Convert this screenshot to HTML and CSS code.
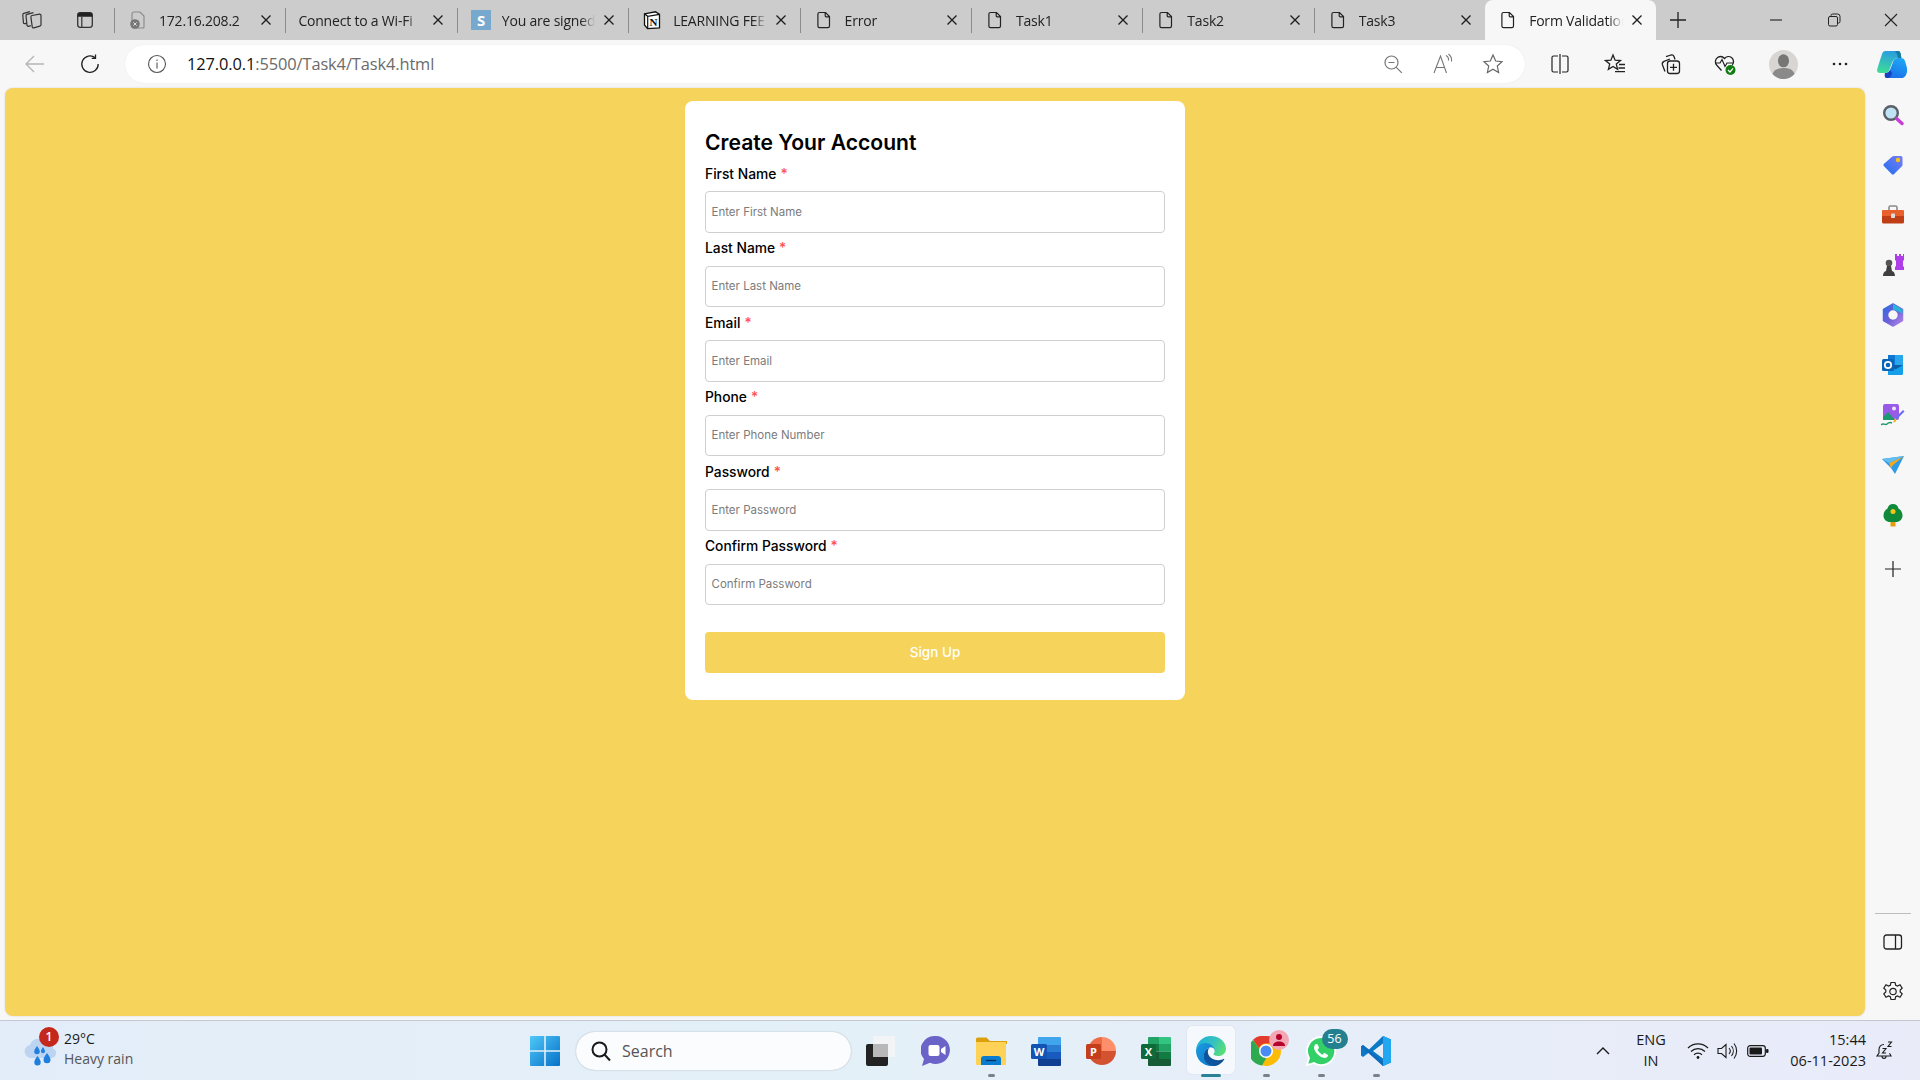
FILE: index.html
```html
<!DOCTYPE html>
<html lang="en">
<head>
<meta charset="utf-8">
<title>Form Validation</title>
<link rel="stylesheet" href="styles.css">
</head>
<body>
<svg class="defs" width="0" height="0" aria-hidden="true">
  <defs>
    <symbol id="doc" viewBox="0 0 20 20"><path d="M5.500 2.500h6l4 4v9.600a1.600 1.600 0 0 1-1.600 1.600H5.500a1.600 1.600 0 0 1-1.600-1.600V4.100a1.600 1.600 0 0 1 1.600-1.600zM11.200 2.700v3.100a1 1 0 0 0 1 1h3.100" fill="none" stroke="#222" stroke-width="1.200"/></symbol>
    <symbol id="x" viewBox="0 0 12 12"><path d="M1.500 1.500l9 9M10.500 1.500l-9 9" fill="none" stroke="#1c1c1c" stroke-width="1.300"/></symbol>
  </defs>
</svg>

<header class="tabstrip">
  <div class="strip-left">
    <span class="strip-cell">
      <svg width="22" height="22" viewBox="0 0 22 22" fill="none" stroke="#333" stroke-width="1.200" stroke-linejoin="round"><path d="M11 6.500l7.500-1.300a1.300 1.300 0 0 1 1.500 1.200v9.400a1.500 1.500 0 0 1-1.200 1.400l-6 1.700a1.300 1.300 0 0 1-1.600-1.200l-1.300-9.600a1.500 1.500 0 0 1 1.100-1.600z"/><path d="M9.800 16.700l-2.300.6a1.300 1.300 0 0 1-1.500-1.100L5 7a1.500 1.500 0 0 1 1-1.600L12.500 3.700M5.200 14.300l-1.500.4a1.200 1.200 0 0 1-1.300-1L1.800 6a1.500 1.500 0 0 1 1-1.600L9 2.600"/></svg>
    </span>
    <span class="strip-cell">
      <svg width="20" height="20" viewBox="0 0 20 20"><rect x="2.700" y="2.700" width="14.600" height="14.600" rx="2.500" fill="none" stroke="#333" stroke-width="1.300"/><path d="M2.700 5a2.300 2.300 0 0 1 2.300-2.300h10A2.300 2.300 0 0 1 17.300 5v1.800H2.700z" fill="#222"/><path d="M6.800 6.800v10.500" stroke="#333" stroke-width="1.200"/></svg>
    </span>
  </div>
  <i class="sep"></i>
  <div class="tab">
    <svg class="tab-icon" width="20" height="20" viewBox="0 0 20 20"><path d="M6 2h6l4 4v11a1 1 0 0 1-1 1H6a2 2 0 0 1-2-2V4a2 2 0 0 1 2-2z" fill="none" stroke="#888" stroke-width="1.100"/><circle cx="7" cy="14" r="4.800" fill="#777"/><path d="M5.300 12.300l3.400 3.400M8.700 12.300l-3.400 3.400" stroke="#ddd" stroke-width="1"/></svg>
    <span class="tab-title">172.16.208.2</span>
    <svg class="tab-x" width="12" height="12"><use href="#x"/></svg>
  </div>
  <i class="sep"></i>
  <div class="tab tab-noicon">
    <span class="tab-title">Connect to a Wi-Fi</span>
    <svg class="tab-x" width="12" height="12"><use href="#x"/></svg>
  </div>
  <i class="sep"></i>
  <div class="tab">
    <svg class="tab-icon" width="20" height="20" viewBox="0 0 20 20"><rect width="20" height="20" fill="#77a9cf"/><text x="10" y="15.500" class="s-logo">S</text></svg>
    <span class="tab-title">You are signed</span>
    <svg class="tab-x" width="12" height="12"><use href="#x"/></svg>
  </div>
  <i class="sep"></i>
  <div class="tab">
    <svg class="tab-icon" width="20" height="20" viewBox="0 0 20 20"><path d="M2.500 3.800L13.500 1.800l4 2.600v13.400L5.500 18.600l-3-3.700z" fill="#fff" stroke="#111" stroke-width="1.300"/><path d="M2.500 3.800l3.200 2.500 11.800-1.900M5.700 6.300v12.200" fill="none" stroke="#111" stroke-width="1.200"/><text x="11.300" y="15.700" class="n-logo">N</text></svg>
    <span class="tab-title">LEARNING FEE</span>
    <svg class="tab-x" width="12" height="12"><use href="#x"/></svg>
  </div>
  <i class="sep"></i>
  <div class="tab">
    <svg class="tab-icon" width="20" height="20"><use href="#doc"/></svg>
    <span class="tab-title">Error</span>
    <svg class="tab-x" width="12" height="12"><use href="#x"/></svg>
  </div>
  <i class="sep"></i>
  <div class="tab">
    <svg class="tab-icon" width="20" height="20"><use href="#doc"/></svg>
    <span class="tab-title">Task1</span>
    <svg class="tab-x" width="12" height="12"><use href="#x"/></svg>
  </div>
  <i class="sep"></i>
  <div class="tab">
    <svg class="tab-icon" width="20" height="20"><use href="#doc"/></svg>
    <span class="tab-title">Task2</span>
    <svg class="tab-x" width="12" height="12"><use href="#x"/></svg>
  </div>
  <i class="sep"></i>
  <div class="tab">
    <svg class="tab-icon" width="20" height="20"><use href="#doc"/></svg>
    <span class="tab-title">Task3</span>
    <svg class="tab-x" width="12" height="12"><use href="#x"/></svg>
  </div>
  <div class="tab tab-active">
    <svg class="tab-icon" width="20" height="20"><use href="#doc"/></svg>
    <span class="tab-title">Form Validation</span>
    <svg class="tab-x" width="12" height="12"><use href="#x"/></svg>
  </div>
  <span class="newtab">
    <svg width="18" height="18" viewBox="0 0 18 18"><path d="M9 1v16M1 9h16" stroke="#222" stroke-width="1.300"/></svg>
  </span>
  <div class="window-btns">
    <span class="win-cell"><svg width="14" height="14" viewBox="0 0 14 14"><path d="M1 7h12" stroke="#222" stroke-width="1.100"/></svg></span>
    <span class="win-cell"><svg width="14" height="14" viewBox="0 0 14 14" fill="none" stroke="#222" stroke-width="1"><rect x="1.500" y="3.500" width="9" height="9.500" rx="1.500"/><path d="M4 3.400V2.500A1.500 1.500 0 0 1 5.500 1h5A2.500 2.500 0 0 1 13 3.500v5a1.500 1.500 0 0 1-1.500 1.500h-1"/></svg></span>
    <span class="win-cell"><svg width="14" height="14" viewBox="0 0 14 14"><path d="M1 1l12 12M13 1L1 13" stroke="#222" stroke-width="1.100"/></svg></span>
  </div>
</header>

<nav class="toolbar">
  <span class="tool-cell">
    <svg width="20" height="20" viewBox="0 0 20 20" fill="none" stroke="#b5b5b5" stroke-width="1.300"><path d="M19 10H1M9 2l-8 8 8 8"/></svg>
  </span>
  <span class="tool-cell">
    <svg width="20" height="20" viewBox="0 0 20 20" fill="none" stroke="#222" stroke-width="1.300"><path d="M15.200 3.800A8.200 8.200 0 1 0 18.200 10M15.500 0.500v3.800h-3.800"/></svg>
  </span>
  <div class="address">
    <svg class="addr-info" width="20" height="20" viewBox="0 0 20 20" fill="none" stroke="#555" stroke-width="1.100"><circle cx="10" cy="10" r="8.500"/><path d="M10 8.500v6M10 5.500v1.400"/></svg>
    <span class="url"><span class="url-host">127.0.0.1</span>:5500/Task4/Task4.html</span>
    <span class="addr-cell">
      <svg width="20" height="20" viewBox="0 0 20 20" fill="none" stroke="#777" stroke-width="1.200"><circle cx="8.500" cy="8.500" r="6.500"/><path d="M13.300 13.300l5.500 5.500M5.500 8.500h6"/></svg>
    </span>
    <span class="addr-cell">
      <svg width="22" height="22" viewBox="0 0 22 22" fill="none" stroke="#777" stroke-width="1.100"><path d="M2 20L8.500 3l6 17M4.300 14.500h8.500M14 2.500a5 5 0 0 1 2.500 5M16.500 1a8 8 0 0 1 3 7.500"/></svg>
    </span>
    <span class="addr-cell">
      <svg width="22" height="22" viewBox="0 0 22 22" fill="none" stroke="#666" stroke-width="1.200"><path d="M11 2l2.700 6 6.300.7-4.700 4.300 1.300 6.500-5.600-3.300-5.600 3.300L6.700 13 2 8.700 8.300 8z"/></svg>
    </span>
  </div>
  <span class="tool-cell tool-first">
    <svg width="22" height="22" viewBox="0 0 22 22" fill="none" stroke="#222" stroke-width="1.200"><path d="M9 3H4.500A1.500 1.500 0 0 0 3 4.500v13A1.500 1.500 0 0 0 4.500 19H9M13 3h4.500A1.500 1.500 0 0 1 19 4.500v13a1.500 1.500 0 0 1-1.500 1.500H13M11 1v20"/></svg>
  </span>
  <span class="tool-cell">
    <svg width="22" height="22" viewBox="0 0 22 22" fill="none" stroke="#222" stroke-width="1.300"><path d="M9 2l2.100 5.200 5.400.4-4.200 3.500 1.300 5.300L9 13.500l-4.600 2.900 1.300-5.300-4.200-3.500 5.400-.4zM15 11.500h6M14.500 15h6.500M11 18.700h10"/></svg>
  </span>
  <span class="tool-cell">
    <svg width="22" height="22" viewBox="0 0 22 22" fill="none" stroke="#222" stroke-width="1.300"><path d="M6 18.500L3.500 12A3 3 0 0 1 5 8.300L11 6M7 3.700l5-1.700a2.500 2.500 0 0 1 3 1.500l1 3"/><rect x="8.500" y="8" width="12" height="12.500" rx="2.500"/><path d="M14.500 10.800v7M11 14.300h7"/></svg>
  </span>
  <span class="tool-cell">
    <svg width="24" height="24" viewBox="0 0 24 24"><path d="M8.500 18.500L4 13.500a5.200 5.200 0 0 1 1-8.300 5.300 5.300 0 0 1 6.500 1.300 5.300 5.300 0 0 1 7-1 5.200 5.200 0 0 1 .8 7.500" fill="none" stroke="#222" stroke-width="1.300"/><path d="M2.500 11h4.500l2-3.500 3 7 2-3.500h6" fill="none" stroke="#222" stroke-width="1.200"/><circle cx="17.500" cy="18" r="5" fill="#107c10"/><path d="M15 18l2 2 3-3.600" fill="none" stroke="#fff" stroke-width="1.200"/></svg>
  </span>
  <span class="tool-cell tool-avatar">
    <svg width="29" height="29" viewBox="0 0 29 29"><circle cx="14.500" cy="14.500" r="14.500" fill="#d8d6d4"/><ellipse cx="14.500" cy="10.800" rx="5.600" ry="6.500" fill="#767676"/><path d="M3.500 24c1.500-4.500 5.500-6 11-6s9.500 1.500 11 6a14.500 14.500 0 0 1-22 0z" fill="#8a8a8a"/></svg>
  </span>
  <span class="tool-cell tool-dots">
    <svg width="18" height="4" viewBox="0 0 18 4"><circle cx="3" cy="2" r="1.300" fill="#222"/><circle cx="9" cy="2" r="1.300" fill="#222"/><circle cx="15" cy="2" r="1.300" fill="#222"/></svg>
  </span>
  <span class="tool-cell tool-copilot">
    <svg width="30" height="27" viewBox="0 0 30 27"><defs><linearGradient id="cpa" x1="0.500" y1="0" x2="0.300" y2="1"><stop offset="0" stop-color="#2a9de0"/><stop offset="1" stop-color="#3ddc97"/></linearGradient><linearGradient id="cpb" x1="0.700" y1="0" x2="0.300" y2="1"><stop offset="0" stop-color="#1ea7f5"/><stop offset="1" stop-color="#1b6fe8"/></linearGradient></defs><path d="M21 7h3q3 0 4 3l2 7q1 7-4 10H10q-3 0-2-5 4 0 5-3l3-8q1-4 5-4z" fill="url(#cpb)"/><path d="M8 22q4 0 5-3l2 3q-1 5-5 5-3 0-2-5z" fill="#1a3fc0"/><path d="M8 0h13q2 0 2.500 2l.5 5q-7-1-9 5l-3 8q-1 2-4 2H3q-4 0-2.500-5L5 3q1-3 3-3z" fill="url(#cpa)"/><path d="M18 0h3q2 0 2.500 2l1 5H21q0-4-3-7z" fill="#1a7a9a"/></svg>
  </span>
</nav>

<div class="body-row">
  <main class="content">
    <form class="card">
      <h1 class="card-title">Create Your Account</h1>
      <div class="field"><label class="field-label">First Name <span class="req">*</span></label><input class="field-input" placeholder="Enter First Name"></div>
      <div class="field"><label class="field-label">Last Name <span class="req">*</span></label><input class="field-input" placeholder="Enter Last Name"></div>
      <div class="field"><label class="field-label">Email <span class="req">*</span></label><input class="field-input" placeholder="Enter Email"></div>
      <div class="field"><label class="field-label">Phone <span class="req">*</span></label><input class="field-input" placeholder="Enter Phone Number"></div>
      <div class="field"><label class="field-label">Password <span class="req">*</span></label><input class="field-input" placeholder="Enter Password"></div>
      <div class="field"><label class="field-label">Confirm Password <span class="req">*</span></label><input class="field-input" placeholder="Confirm Password"></div>
      <button class="submit" type="button">Sign Up</button>
    </form>
  </main>
  <aside class="sidebar">
    <span class="side-cell">
      <svg width="22" height="22" viewBox="0 0 22 22"><circle cx="9" cy="9" r="6.800" fill="#bfe3f5" stroke="#5a5f66" stroke-width="2.400"/><path d="M14.500 14.500l5.500 5" stroke="#c63ed6" stroke-width="3.400" stroke-linecap="round"/></svg>
    </span>
    <span class="side-cell">
      <svg width="22" height="22" viewBox="0 0 22 22"><defs><linearGradient id="tag" x1="0" y1="1" x2="1" y2="0"><stop offset="0" stop-color="#1e6ff0"/><stop offset="1" stop-color="#7c7cf5"/></linearGradient></defs><path d="M12 2h7a1.500 1.500 0 0 1 1.500 1.500V11a2 2 0 0 1-.6 1.300l-8 8a1.500 1.500 0 0 1-2 0L1.800 12a1.500 1.500 0 0 1 0-2l8.500-7.400A2.500 2.500 0 0 1 12 2z" fill="url(#tag)"/><circle cx="16" cy="6" r="2.200" fill="#f5c518"/></svg>
    </span>
    <span class="side-cell">
      <svg width="24" height="22" viewBox="0 0 24 22"><path d="M8 6V3.500A1.500 1.500 0 0 1 9.500 2h5A1.500 1.500 0 0 1 16 3.500V6" fill="none" stroke="#8a8a8a" stroke-width="1.600"/><path d="M2 6h20a1 1 0 0 1 1 1v5H1V7a1 1 0 0 1 1-1z" fill="#e8602c"/><path d="M1 12h22v6a1.500 1.500 0 0 1-1.500 1.500h-19A1.500 1.500 0 0 1 1 18z" fill="#bf3e16"/><rect x="10" y="9.500" width="4" height="4.500" rx=".8" fill="#ddd"/></svg>
    </span>
    <span class="side-cell">
      <svg width="24" height="24" viewBox="0 0 24 24"><path d="M14 1h2v2h2V1h2v2h2V1h1v6l-1 1v5l1 1v3H14v-3l1-1V8l-1-1z" fill="#b03ee8"/><circle cx="8" cy="10" r="3.300" fill="#555"/><path d="M6 13h4l1 5H5zM2 23c0-3 1.500-4.500 3-5h6c1.500.5 3 2 3 5z" fill="#3f3f3f"/></svg>
    </span>
    <span class="side-cell">
      <svg width="24" height="24" viewBox="0 0 24 24"><defs><linearGradient id="m365" x1="0" y1="0" x2="1" y2="1"><stop offset="0" stop-color="#2a6fe0"/><stop offset=".5" stop-color="#6b5fd9"/><stop offset="1" stop-color="#b889e6"/></linearGradient></defs><path d="M12 1l9.500 5.500v11L12 23l-9.500-5.500v-11z" fill="url(#m365)" stroke="url(#m365)" stroke-width="1.500" stroke-linejoin="round"/><circle cx="12" cy="12" r="4.700" fill="#f7f7f7"/><path d="M12 1l9.500 5.500v4L16 8a6 6 0 0 0-4-1.300z" fill="#28b4d8"/></svg>
    </span>
    <span class="side-cell">
      <svg width="22" height="22" viewBox="0 0 22 22"><rect x="6" y="1" width="15" height="10" fill="#0f78d4"/><rect x="13" y="1" width="8" height="10" fill="#28a8ea"/><path d="M6 11h15v8.500A1.500 1.500 0 0 1 19.500 21H6z" fill="#14a0e8"/><path d="M21 11l-7.500 4.500L6 11" fill="#0a5fa8"/><rect x="0" y="5" width="12" height="12" rx="1.500" fill="#0a64b8"/><circle cx="6" cy="11" r="3.200" fill="none" stroke="#fff" stroke-width="1.700"/></svg>
    </span>
    <span class="side-cell">
      <svg width="24" height="24" viewBox="0 0 24 24"><rect x="2" y="1" width="16" height="16" rx="2" fill="#9a5ae8"/><circle cx="13" cy="5.500" r="2" fill="#f0e5ff"/><path d="M2 17v-3l5-5 7 8z" fill="#1a9a6e"/><path d="M14 15l8-8 1.500 1.500-8 8z" fill="#6c6cf0"/><path d="M14 15l1.500 1.500-1 2.500-2.500.5z" fill="#f5b324"/><path d="M0 22c2-3 4 1 6-1s3-2 5-1" fill="none" stroke="#1d9a68" stroke-width="1.400"/></svg>
    </span>
    <span class="side-cell">
      <svg width="24" height="20" viewBox="0 0 24 20"><path d="M1 4l22-3-9 18-4-6z" fill="#2d9be8"/><path d="M23 1L8 8l2 5 2-3z" fill="#f5a81c"/><path d="M23 1L1 4l7 4z" fill="#62bdf0"/></svg>
    </span>
    <span class="side-cell">
      <svg width="22" height="24" viewBox="0 0 22 24"><rect x="8.500" y="17" width="5" height="6.500" fill="#e89a10"/><path d="M11 1c3 0 5 2 5.500 4.500 2.500 1.500 4 4 4 7 0 4-3 6.500-6.500 6.500H8C4.500 19 1.500 16.500 1.500 12.500c0-3 1.500-5.500 4-7C6 3 8 1 11 1z" fill="#0f8a3a"/><circle cx="11" cy="8.500" r="2.500" fill="#f5c518"/></svg>
    </span>
    <span class="side-cell side-add">
      <svg width="16" height="16" viewBox="0 0 16 16"><path d="M8 0v16M0 8h16" stroke="#222" stroke-width="1.200"/></svg>
    </span>
    <i class="side-divider"></i>
    <span class="side-cell">
      <svg width="20" height="16" viewBox="0 0 20 16" fill="none" stroke="#222" stroke-width="1.300"><rect x="1" y="1" width="17.500" height="14" rx="2.500"/><path d="M12.500 1v14"/></svg>
    </span>
    <span class="side-cell">
      <svg width="22" height="22" viewBox="0 0 22 22" fill="none" stroke="#222" stroke-width="1.200"><path d="M9 1.500h4l.7 2.700 1.800.8 2.500-1.300 2.200 3.400-2 1.900v2l2 1.900-2.200 3.400-2.500-1.300-1.800.8-.7 2.700H9l-.7-2.700-1.800-.8L4 16.300l-2.200-3.400 2-1.900v-2l-2-1.900L4 3.700 6.500 5l1.800-.8z"/><circle cx="11" cy="10.500" r="3.200"/></svg>
    </span>
  </aside>
</div>

<footer class="taskbar">
  <div class="weather">
    <span class="weather-icon">
      <svg width="34" height="34" viewBox="0 0 34 34"><path d="M7 24a6.500 6.500 0 0 1-1-12.900A8.500 8.500 0 0 1 20 7a7 7 0 0 1 9 7.500 5 5 0 0 1-1 9.500z" fill="#bcd3f2"/><path d="M13 12c1.800 2.800 2.800 4 2.800 5.500a2.800 2.800 0 0 1-5.600 0c0-1.500 1-2.700 2.800-5.500zM23 19c2 3 3.500 4.500 3.500 6.800a3.500 3.500 0 0 1-7 0c0-2.300 1.500-3.800 3.500-6.800zM13.500 22c1.800 2.700 3.200 4.200 3.200 6.200a3.200 3.200 0 0 1-6.400 0c0-2 1.400-3.500 3.200-6.200zM19 13c1.200 2 2 3 2 4.200a2 2 0 0 1-4 0c0-1.200.8-2.200 2-4.200z" fill="#1e7fe0"/></svg>
      <span class="weather-badge">1</span>
    </span>
    <div class="weather-text">
      <span class="weather-temp">29°C</span>
      <span class="weather-desc">Heavy rain</span>
    </div>
  </div>
  <span class="start-cell">
    <svg width="30" height="30" viewBox="0 0 30 30"><defs><linearGradient id="win" x1="0" y1="0" x2="1" y2="1"><stop offset="0" stop-color="#4fc8f8"/><stop offset="1" stop-color="#0670c8"/></linearGradient></defs><path d="M0 1a1 1 0 0 1 1-1h13.200v14.200H0zM15.800 0H29a1 1 0 0 1 1 1v13.200H15.800zM0 15.800h14.200V30H1a1 1 0 0 1-1-1zM15.800 15.800H30V29a1 1 0 0 1-1 1H15.800z" fill="url(#win)"/></svg>
  </span>
  <div class="searchbox">
    <svg width="22" height="22" viewBox="0 0 22 22" fill="none" stroke="#1a1a1a" stroke-width="2"><circle cx="9.500" cy="9.500" r="7"/><path d="M14.500 14.500l5.500 6"/></svg>
    <span class="search-text">Search</span>
  </div>
  <div class="apps">
    <span class="app">
      <svg width="32" height="32" viewBox="0 0 32 32"><rect x="1" y="9" width="22" height="22" rx="2" fill="#222"/><rect x="8" y="1" width="22" height="21" rx="1" fill="#f4f4f4" opacity=".85"/><rect x="8" y="9" width="15" height="13" fill="#b8b8b8"/></svg>
    </span>
    <span class="app">
      <svg width="30" height="32" viewBox="0 0 30 32"><path d="M15 1a14 14 0 1 1-6 26.700L1 31l2-7A14 14 0 0 1 15 1z" fill="#6c63c9"/><rect x="7.500" y="10" width="11" height="11" rx="2" fill="#fff"/><path d="M20 14l4.500-3v9L20 17z" fill="#fff"/></svg>
    </span>
    <span class="app app-on">
      <svg width="32" height="30" viewBox="0 0 32 30"><path d="M1 3a1.500 1.500 0 0 1 1.500-1.500h9L15 5h17v3H1z" fill="#dca00c"/><path d="M1 6h30v22a1 1 0 0 1-1 1H2a1 1 0 0 1-1-1z" fill="#fdd256"/><path d="M6 29v-6a3 3 0 0 1 3-3h14a3 3 0 0 1 3 3v6z" fill="#0a7cd0"/><path d="M11 24.500h10" stroke="#042f5a" stroke-width="1.300"/></svg>
    </span>
    <span class="app">
      <svg width="30" height="30" viewBox="0 0 30 30"><path d="M8 1h21a1 1 0 0 1 1 1v7H7V2a1 1 0 0 1 1-1z" fill="#41a5ee"/><rect x="7" y="9" width="23" height="7" fill="#2b7cd3"/><rect x="7" y="16" width="23" height="7" fill="#185abd"/><path d="M7 23h23v6a1 1 0 0 1-1 1H8a1 1 0 0 1-1-1z" fill="#103f91"/><rect y="8" width="16" height="15" rx="1.500" fill="#1254b4"/><text x="8" y="20" class="o-letter">W</text></svg>
    </span>
    <span class="app">
      <svg width="30" height="30" viewBox="0 0 30 30"><path d="M16 1a14 14 0 0 1 14 14H16z" fill="#ff8f6b"/><path d="M16 1A14 14 0 0 0 2 15h14z" fill="#ed6c47"/><path d="M2 15a14 14 0 0 0 28 0z" fill="#d35230"/><rect y="8" width="15" height="15" rx="1.500" fill="#c43e1c"/><text x="7.500" y="20" class="o-letter">P</text></svg>
    </span>
    <span class="app">
      <svg width="30" height="30" viewBox="0 0 30 30"><path d="M8 1h10v7H7V2a1 1 0 0 1 1-1z" fill="#21a366"/><path d="M18 1h11a1 1 0 0 1 1 1v6H18z" fill="#33c481"/><rect x="7" y="8" width="11" height="7.500" fill="#107c41"/><rect x="18" y="8" width="12" height="7.500" fill="#21a366"/><rect x="7" y="15.500" width="11" height="7.500" fill="#185c37"/><rect x="18" y="15.500" width="12" height="7.500" fill="#107c41"/><path d="M7 23h23v6a1 1 0 0 1-1 1H8a1 1 0 0 1-1-1z" fill="#185c37"/><rect y="8" width="15" height="15" rx="1.500" fill="#0f6a3a"/><text x="7.500" y="20" class="o-letter">X</text></svg>
    </span>
    <span class="app app-active">
      <svg width="30" height="30" viewBox="0 0 256 256"><defs><linearGradient id="edgea" x1="0" y1="1" x2="1" y2="0"><stop offset="0" stop-color="#0c59a4"/><stop offset="1" stop-color="#114a8b"/></linearGradient><linearGradient id="edgeb" x1="0" y1="0" x2="1" y2="1"><stop offset="0" stop-color="#1b9de2"/><stop offset="1" stop-color="#0c72c8"/></linearGradient><linearGradient id="edgec" x1="0" y1="0.300" x2="1" y2="0.700"><stop offset="0" stop-color="#1fb2d8"/><stop offset=".5" stop-color="#35c1c1"/><stop offset="1" stop-color="#5be16f"/></linearGradient></defs><path d="M235.700 195.500a93.700 93.700 0 0 1-10.600 4.700 101.900 101.900 0 0 1-35.900 6.400c-47.300 0-88.500-32.500-88.500-74.300a31.500 31.500 0 0 1 16.400-27.300c-42.800 1.800-53.800 46.400-53.800 72.500 0 73.900 68.100 81.400 82.800 81.400 7.900 0 19.800-2.300 27-4.600l1.300-.4a128.300 128.300 0 0 0 66.600-52.800 4 4 0 0 0-5.300-5.700z" fill="url(#edgea)"/><path d="M105.700 241.400A79.200 79.200 0 0 1 83 220a80.700 80.700 0 0 1 29.500-120c3.200-1.500 8.500-4.100 15.600-4a32.400 32.400 0 0 1 25.700 13 31.900 31.900 0 0 1 6.300 18.700c0-.2 24.500-79.600-80-79.600-43.900 0-80 41.600-80 78.200a130.200 130.200 0 0 0 12.100 56 128 128 0 0 0 156.400 67 75.500 75.500 0 0 1-62.500-8z" fill="url(#edgeb)"/><path d="M152.300 148.900c-.8 1-3.300 2.500-3.300 5.700 0 2.600 1.700 5.200 4.800 7.300 14.300 10 41.400 8.600 41.500 8.600a59.500 59.500 0 0 0 30.300-8.300 61.400 61.400 0 0 0 30.400-52.900c.3-22.400-8-37.300-11.300-43.900C223.500 24.900 177.600 0 128 0A128 128 0 0 0 0 126.200c.5-36.500 36.800-66 80-66 3.500 0 23.500.3 42 10a72.600 72.600 0 0 1 30.900 29.300c6.100 10.600 7.200 24.100 7.200 29.500s-2.700 13.300-7.800 19.900z" fill="url(#edgec)"/></svg>
      <i class="app-active-bar"></i>
    </span>
    <span class="app app-on">
      <svg width="30" height="30" viewBox="0 0 30 30"><circle cx="15" cy="15" r="15" fill="#fbbc05"/><path d="M15 0a15 15 0 0 1 13 7.500H15a7.500 7.500 0 0 0-7 4.700L2 3.700A15 15 0 0 1 15 0z" fill="#e33b2e"/><path d="M2 4A15 15 0 0 0 11 29.500l6-10.500a7.500 7.500 0 0 1-9-6.500z" fill="#2da94f"/><circle cx="15" cy="15" r="7" fill="#fff"/><circle cx="15" cy="15" r="5.500" fill="#4a8af4"/></svg>
      <span class="chrome-badge"><svg width="14" height="14" viewBox="0 0 14 14"><circle cx="7" cy="4" r="3" fill="#b4002a"/><path d="M1 13c0-3 2.500-4.500 6-4.500s6 1.500 6 4.500z" fill="#b4002a"/></svg></span>
    </span>
    <span class="app app-on">
      <svg width="30" height="30" viewBox="0 0 30 30"><path d="M15 1a14 14 0 1 1-7 26L1 29l2-7A14 14 0 0 1 15 1z" fill="#33d067" stroke="#fff" stroke-width="1.800"/><path d="M10 8c-1 .5-2 2-2 3.500 0 4 5.500 10 10.500 10.500 2 0 3.500-1.500 3.500-2.800 0-.6-3.500-2.500-4-2.200l-1.500 1.700c-1.500-.5-4.500-3.500-5-5L13 12c.3-.5-1.500-4-2-4z" fill="#fff"/></svg>
      <span class="wa-badge">56</span>
    </span>
    <span class="app app-on">
      <svg width="32" height="32" viewBox="0 0 32 32"><path d="M23 1l8 3.500v23L23 31 9 17.500 3 22 1 20.500V11.500L3 10l6 4.500z" fill="#0a7ac8"/><path d="M23 1l8 3.500v23L23 31z" fill="#22a7f0"/><path d="M23 8.500L13 16l10 7.500z" fill="#e8eef9"/><path d="M1 11.500L3 10l20 17v4L1 11.500z" fill="#0f6cbd"/></svg>
    </span>
  </div>
  <div class="tray">
    <span class="tray-chevron"><svg width="14" height="8" viewBox="0 0 14 8"><path d="M1 7l6-6 6 6" fill="none" stroke="#1a1a1a" stroke-width="1.400"/></svg></span>
    <div class="tray-lang"><span>ENG</span><span>IN</span></div>
    <span class="tray-cell"><svg width="22" height="18" viewBox="0 0 22 18" fill="none" stroke="#1a1a1a" stroke-width="1.200"><path d="M1 6a14 14 0 0 1 20 0M4 9.500a10 10 0 0 1 14 0M7 12.800a5.800 5.800 0 0 1 8 0"/><circle cx="11" cy="15.500" r="1.400" fill="#1a1a1a" stroke="none"/></svg></span>
    <span class="tray-cell"><svg width="22" height="18" viewBox="0 0 22 18" fill="none" stroke="#1a1a1a" stroke-width="1.100"><path d="M1 6.500h3.500L9 2.500v13l-4.500-4H1zM12 6a4.500 4.500 0 0 1 0 6M14.500 4a8 8 0 0 1 0 10M17 1.500a12 12 0 0 1 0 15"/></svg></span>
    <span class="tray-cell"><svg width="22" height="12" viewBox="0 0 22 12"><rect x=".7" y=".7" width="17.600" height="10.600" rx="2.500" fill="none" stroke="#1a1a1a" stroke-width="1.200"/><rect x="2.500" y="2.500" width="12.500" height="7" rx="1" fill="#1a1a1a"/><rect x="19" y="4" width="2.500" height="4" rx="1" fill="#1a1a1a"/></svg></span>
    <div class="clock"><span>15:44</span><span>06-11-2023</span></div>
    <span class="tray-bell"><svg width="20" height="20" viewBox="0 0 20 20" fill="none" stroke="#1a1a1a" stroke-width="1.100"><path d="M9 3.500c-3 0-5 2-5 5v3.500l-2 3h14l-1.500-2.800M7 15.500c0 2.500 4 2.500 4 0M7.500 7.500H11L7.500 12H11M13 1h3.500L13 5.500h3.500"/></svg></span>
  </div>
</footer>
</body>
</html>
```

FILE: styles.css
```css
* { box-sizing: border-box; }
html, body { margin: 0; height: 100%; overflow: hidden; }
body {
  width: 1920px;
  height: 1080px;
  display: flex;
  flex-direction: column;
  background: #f7f7f7;
  font-family: "Open Sans", "Noto Sans", sans-serif;
  color: #1a1a1a;
}
.defs { position: absolute; }
svg { display: block; flex: none; }

/* tab strip */
.tabstrip {
  height: 40px;
  flex: none;
  display: flex;
  align-items: center;
  background: #cccccc;
  font-size: 14px;
  letter-spacing: -.2px;
}
.strip-left { width: 114px; flex: none; display: flex; gap: 13px; padding-left: 12px; }
.strip-cell { width: 40px; height: 40px; display: flex; align-items: center; justify-content: center; }
.sep { width: 1px; height: 25px; flex: none; background: #8c8c8c; }
.tab {
  width: 170.400px;
  height: 40px;
  flex: none;
  display: flex;
  align-items: center;
  padding: 0 13px 0 13px;
  color: #222;
}
.tab-noicon { padding-left: 12px; }
.tab-icon { margin-right: 11px; }
.tab-title {
  flex: 1;
  min-width: 0;
  overflow: hidden;
  white-space: nowrap;
  -webkit-mask-image: linear-gradient(to right, #000 85%, transparent 100%);
  mask-image: linear-gradient(to right, #000 85%, transparent 100%);
}
.tab-x { margin-left: 8px; }
.tab-active {
  width: 171px;
  background: #f7f7f7;
  border-radius: 8px 8px 0 0;
}
.s-logo { font: 700 15px "Open Sans", sans-serif; fill: #fff; text-anchor: middle; }
.n-logo { font: 700 11px "Liberation Serif", serif; fill: #111; text-anchor: middle; }
.newtab { width: 44px; display: flex; justify-content: center; }
.window-btns { margin-left: auto; display: flex; }
.win-cell { width: 57.500px; height: 40px; display: flex; align-items: center; justify-content: center; }

/* toolbar */
.toolbar {
  height: 48px;
  flex: none;
  display: flex;
  align-items: center;
  padding-left: 7px;
  background: #f7f7f7;
}
.tool-cell { width: 55px; height: 48px; flex: none; display: flex; align-items: center; justify-content: center; }
.tool-first { margin-left: 7.500px; }
.tool-avatar { margin-left: 3px; }
.tool-dots { margin-left: 2px; }
.tool-copilot { margin-left: -3px; }
.address {
  width: 1400px;
  height: 38px;
  flex: none;
  margin-left: 8px;
  padding: 0 7px 0 22px;
  display: flex;
  align-items: center;
  background: #fff;
  border-radius: 19px;
  box-shadow: 0 0 1px rgba(0,0,0,.12);
}
.addr-info { margin-right: 20px; }
.url { flex: 1; padding-bottom: 2px; font-size: 16.400px; color: #6b6b6b; letter-spacing: -.1px; }
.url-host { color: #111; }
.addr-cell { width: 50px; display: flex; justify-content: center; }

/* page */
.body-row { flex: 1; min-height: 0; display: flex; }
.content {
  width: 1860px;
  flex: none;
  margin: 0 0 4px 5px;
  padding-top: 13px;
  display: flex;
  justify-content: center;
  align-items: flex-start;
  background: #f6d35b;
  border-radius: 8px;
  box-shadow: 0 0 2px rgba(0,0,0,.15);
}
.card {
  width: 500px;
  height: 599px;
  padding: 20px;
  background: #fff;
  border-radius: 8px;
  font-family: Inter, "Noto Sans", sans-serif;
}
.card-title { margin: 0; height: 37px; font-size: 21.100px; line-height: 44px; font-weight: 600; color: #000; }
.field { display: flex; flex-direction: column; }
.field-label { height: 33px; padding-bottom: 2px; display: flex; align-items: center; gap: 4px; font-size: 13.800px; font-weight: 500; color: #000; }
.req { color: #ff4d4d; }
.field-input {
  height: 41.500px;
  padding: 0 5.500px;
  border: 1.500px solid #cfcfcf;
  border-radius: 4px;
  outline: none;
  background: #fff;
  font: 400 11.500px Inter, "Noto Sans", sans-serif;
}
.field-input::placeholder { color: #7c7c7c; opacity: 1; }
.submit {
  width: 100%;
  height: 41px;
  margin-top: 27px;
  padding: 0 0 2px;
  border: none;
  border-radius: 4px;
  background: #f6d35b;
  color: #fff;
  font: 500 13.500px Inter, "Noto Sans", sans-serif;
}

/* edge sidebar */
.sidebar { flex: 1; display: flex; flex-direction: column; align-items: center; padding: 2px 0 3px; }
.side-cell { width: 40px; height: 50px; flex: none; display: flex; align-items: center; justify-content: center; }
.side-add { margin-top: 4px; }
.side-divider { width: 36px; height: 1px; margin: auto 0 3px; background: #bdbdbd; }

/* taskbar */
.taskbar {
  height: 60px;
  flex: none;
  display: flex;
  align-items: center;
  background: linear-gradient(to right, #e3edf9, #e4f0f8 45%, #e9ebf9 100%);
  border-top: 1px solid #c4c8d0;
}
.weather { width: 516px; flex: none; display: flex; align-items: center; padding-left: 24px; }
.weather-icon { position: relative; width: 34px; height: 34px; margin-right: 6px; }
.weather-badge {
  position: absolute;
  left: 15px;
  top: -7px;
  width: 20px;
  height: 20px;
  border-radius: 50%;
  background: #c4281c;
  color: #fff;
  font-size: 12px;
  font-weight: 600;
  line-height: 20px;
  text-align: center;
}
.weather-text { display: flex; flex-direction: column; padding-bottom: 4px; font-size: 14px; line-height: 20px; }
.weather-desc { color: #555; }
.start-cell { width: 57px; flex: none; display: flex; justify-content: center; }
.searchbox {
  width: 275px;
  height: 38px;
  flex: none;
  margin-left: 3px;
  padding-left: 14px;
  display: flex;
  align-items: center;
  gap: 10px;
  background: #fbfcfe;
  border-radius: 19px;
  box-shadow: 0 0 1.500px rgba(0,0,0,.3);
}
.search-text { font-size: 16px; color: #555; }
.apps { display: flex; margin-left: 2.500px; }
.app { position: relative; width: 55px; height: 59px; flex: none; display: flex; align-items: center; justify-content: center; }
.app-on::after {
  content: "";
  position: absolute;
  left: 24px;
  bottom: 3px;
  width: 7px;
  height: 3px;
  border-radius: 2px;
  background: #7b7f88;
}
.app-active::before {
  content: "";
  position: absolute;
  left: 3.500px;
  top: 5px;
  width: 48px;
  height: 48px;
  border-radius: 5px;
  background: rgba(255,255,255,.6);
  box-shadow: 0 0 1px rgba(0,0,0,.2);
}
.app-active svg { position: relative; }
.app-active-bar {
  position: absolute;
  left: 17.500px;
  bottom: 3px;
  width: 20px;
  height: 3px;
  border-radius: 2px;
  background: #2a8296;
}
.o-letter { font: 700 11px "Open Sans", sans-serif; fill: #fff; text-anchor: middle; }
.chrome-badge {
  position: absolute;
  left: 30px;
  top: 9px;
  width: 20px;
  height: 20px;
  display: flex;
  align-items: center;
  justify-content: center;
  border-radius: 50%;
  background: #f3a7b5;
}
.wa-badge {
  position: absolute;
  left: 28px;
  top: 8px;
  width: 26px;
  height: 20px;
  border-radius: 10px;
  background: #24808f;
  color: #fff;
  font-size: 12.500px;
  line-height: 20px;
  text-align: center;
}
.tray { margin-left: auto; padding-right: 16px; display: flex; align-items: center; font-size: 14.500px; }
.tray-chevron { width: 40px; display: flex; justify-content: center; }
.tray-lang { width: 56px; margin-right: 4px; padding-bottom: 2px; display: flex; flex-direction: column; align-items: center; line-height: 21px; }
.tray-cell { width: 30px; display: flex; justify-content: center; }
.clock { width: 93px; padding-bottom: 1px; display: flex; flex-direction: column; align-items: flex-end; line-height: 21px; }
.tray-bell { width: 38px; display: flex; justify-content: center; }
```
